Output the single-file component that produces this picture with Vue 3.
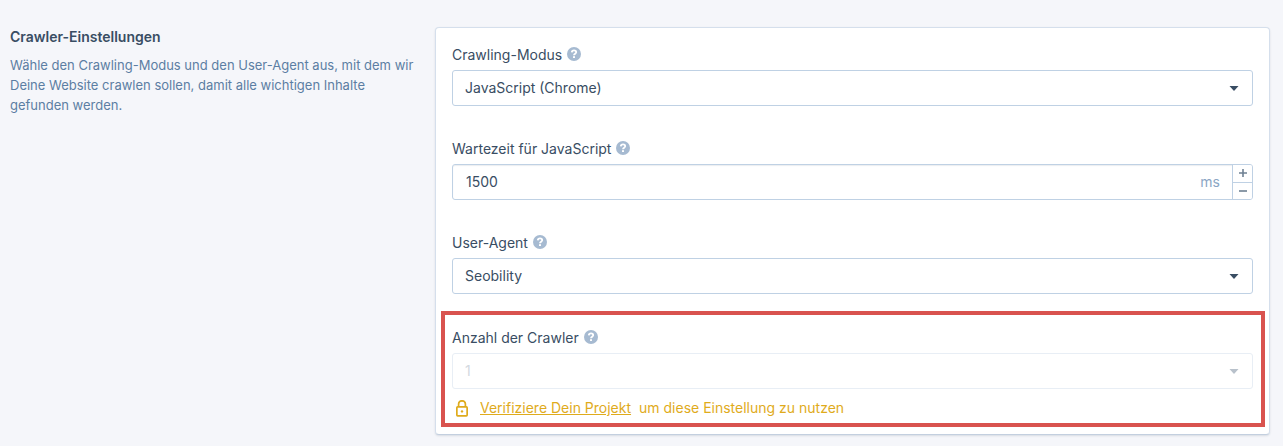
<script setup>
import { ref } from 'vue'

const mode = ref('js')
const delay = ref(1500)
const agent = ref('seobility')
const crawlers = ref('1')

const step = (amount) => {
    delay.value = Math.max(0, Number(delay.value) + amount)
}
</script>

<template>
    <section class="settings">
        <div class="intro">
            <h2 class="intro-title">Crawler-Einstellungen</h2>
            <p class="intro-text">
                Wähle den Crawling-Modus und den User-Agent aus, mit dem wir Deine Website crawlen sollen, damit alle wichtigen Inhalte gefunden werden.
            </p>
        </div>

        <form class="card" @submit.prevent>
            <div class="field">
                <div class="label-row">
                    <label for="mode">Crawling-Modus</label>
                    <svg class="help" viewBox="0 0 14 14" aria-hidden="true">
                        <circle cx="7" cy="7" r="7" />
                        <path d="M4.800 5.400C4.900 4.100 5.800 3.400 7 3.400s2.200.7 2.200 1.800c0 1.400-2.200 1.500-2.200 3" />
                        <rect x="6" y="9.200" width="2" height="1.800" />
                    </svg>
                </div>
                <div class="select-box">
                    <select id="mode" v-model="mode" class="control">
                        <option value="js">JavaScript (Chrome)</option>
                    </select>
                    <svg class="caret" viewBox="0 0 10 5" aria-hidden="true"><path d="M0.500 0h9L5 5z" /></svg>
                </div>
            </div>

            <div class="field">
                <div class="label-row">
                    <label for="delay">Wartezeit für JavaScript</label>
                    <svg class="help" viewBox="0 0 14 14" aria-hidden="true">
                        <circle cx="7" cy="7" r="7" />
                        <path d="M4.800 5.400C4.900 4.100 5.800 3.400 7 3.400s2.200.7 2.200 1.800c0 1.400-2.200 1.500-2.200 3" />
                        <rect x="6" y="9.200" width="2" height="1.800" />
                    </svg>
                </div>
                <div class="number-box">
                    <input id="delay" v-model="delay" class="number-input" type="text" inputmode="numeric">
                    <span class="unit">ms</span>
                    <div class="steps">
                        <button class="step" type="button" aria-label="Erhöhen" @click="step(100)">
                            <svg viewBox="0 0 8 8" aria-hidden="true"><path d="M0 4h8M4 0v8" /></svg>
                        </button>
                        <button class="step" type="button" aria-label="Verringern" @click="step(-100)">
                            <svg viewBox="0 0 8 8" aria-hidden="true"><path d="M0 4h8" /></svg>
                        </button>
                    </div>
                </div>
            </div>

            <div class="field">
                <div class="label-row">
                    <label for="agent">User-Agent</label>
                    <svg class="help" viewBox="0 0 14 14" aria-hidden="true">
                        <circle cx="7" cy="7" r="7" />
                        <path d="M4.800 5.400C4.900 4.100 5.800 3.400 7 3.400s2.200.7 2.200 1.800c0 1.400-2.200 1.500-2.200 3" />
                        <rect x="6" y="9.200" width="2" height="1.800" />
                    </svg>
                </div>
                <div class="select-box">
                    <select id="agent" v-model="agent" class="control">
                        <option value="seobility">Seobility</option>
                    </select>
                    <svg class="caret" viewBox="0 0 10 5" aria-hidden="true"><path d="M0.500 0h9L5 5z" /></svg>
                </div>
            </div>

            <div class="field highlight">
                <div class="label-row">
                    <label for="crawlers">Anzahl der Crawler</label>
                    <svg class="help" viewBox="0 0 14 14" aria-hidden="true">
                        <circle cx="7" cy="7" r="7" />
                        <path d="M4.800 5.400C4.900 4.100 5.800 3.400 7 3.400s2.200.7 2.200 1.800c0 1.400-2.200 1.500-2.200 3" />
                        <rect x="6" y="9.200" width="2" height="1.800" />
                    </svg>
                </div>
                <div class="select-box disabled">
                    <select id="crawlers" v-model="crawlers" class="control" disabled>
                        <option value="1">1</option>
                    </select>
                    <svg class="caret" viewBox="0 0 10 5" aria-hidden="true"><path d="M0.500 0h9L5 5z" /></svg>
                </div>
                <p class="notice">
                    <svg class="lock" viewBox="0 0 12 17" aria-hidden="true">
                        <rect x="0.850" y="6.850" width="10.300" height="9" rx="0.800" />
                        <path d="M2.600 6.800V4a3.400 3.200 0 0 1 6.800 0v2.800" />
                        <circle cx="6" cy="11.400" r="1.200" />
                    </svg>
                    <a class="notice-link" href="#">Verifiziere Dein Projekt</a>
                    <span>um diese Einstellung zu nutzen</span>
                </p>
            </div>
        </form>
    </section>
</template>

<style>
body {
    background-color: #f5f6fa;
}
</style>

<style scoped>
.settings {
    display: grid;
    grid-template-columns: 410px 1fr;
    gap: 15px;
    align-items: start;
    padding: 27px 13px 11px 10px;
    color: #394d63;
    font-family: Inter, "Liberation Sans", sans-serif;
    font-size: 14px;
    line-height: 22px;
}

.intro-title {
    margin: 0;
    font-size: 14px;
    font-weight: 600;
    line-height: 20px;
}

.intro-text {
    margin: 8px 0 0;
    color: #5c7ea3;
    font-size: 13px;
    line-height: 20px;
}

.card {
    padding: 16px 16px 7px;
    border: 1px solid #d5dfec;
    border-bottom-color: #c3cfdf;
    border-radius: 4px;
    background-color: white;
    box-shadow: 0 1px 2px rgba(57, 77, 99, 0.15);
}

.field {
    display: flex;
    flex-direction: column;
    gap: 4px;
    margin-bottom: 32px;
}

.label-row {
    display: flex;
    align-items: center;
    gap: 5px;
}

.help {
    width: 14px;
    height: 14px;
    margin-bottom: 2px;
    fill: #a6bad1;
}

.help path {
    fill: none;
    stroke: white;
    stroke-width: 1.8;
}

.help rect {
    fill: white;
}

.select-box {
    display: grid;
    align-items: center;
}

.control,
.caret {
    grid-area: 1 / 1;
}

.control {
    width: 100%;
    height: 36px;
    padding: 0 32px 0 12px;
    border: 1px solid #bfd1e4;
    border-radius: 3px;
    appearance: none;
    background-color: white;
    color: inherit;
    font: inherit;
    opacity: 1;
}

.caret {
    justify-self: end;
    width: 10px;
    height: 5px;
    margin-right: 14px;
    fill: #394d63;
    pointer-events: none;
}

.disabled .control {
    border-color: #e8eef5;
    color: #d3d9df;
}

.disabled .caret {
    fill: #b8c1cb;
}

.number-box {
    display: flex;
    align-items: center;
    box-sizing: border-box;
    height: 36px;
    border: 1px solid #bfd1e4;
    border-radius: 3px;
    box-shadow: inset 0 1px 1px rgba(57, 77, 99, 0.1);
}

.number-input {
    flex: 1;
    min-width: 0;
    padding: 0 13px;
    border: 0;
    background: none;
    color: inherit;
    font: inherit;
}

.unit {
    padding-right: 12px;
    color: #8ba6c4;
}

.steps {
    display: flex;
    flex-direction: column;
    align-self: stretch;
    width: 19px;
    border-left: 1px solid #bfd1e4;
}

.step {
    display: flex;
    flex: 1;
    align-items: center;
    justify-content: center;
    padding: 0;
    border: 0;
    background-color: white;
}

.step:first-child {
    border-bottom: 1px solid #bfd1e4;
    border-top-right-radius: 2px;
}

.step:last-child {
    border-bottom-right-radius: 2px;
}

.step svg {
    width: 8px;
    height: 8px;
    stroke: #6f8193;
    stroke-width: 1.6;
}

/* --------------------- Rahmen um gesperrte Einstellung --------------------- */
.highlight {
    margin: -15px -12px 0 -11px;
    padding: 12px 8px 4px 7px;
    border: 4px solid #d9534f;
}

.notice {
    display: flex;
    align-items: center;
    gap: 8px;
    margin: 4px 0 0;
    color: #dfab1c;
}

.lock {
    width: 12px;
    height: 17px;
    margin: 0 4px;
    fill: none;
    stroke: #dfab1c;
    stroke-width: 1.7;
}

.lock circle {
    fill: #dfab1c;
    stroke: none;
}

.notice-link {
    color: inherit;
    text-decoration: underline;
}
</style>
